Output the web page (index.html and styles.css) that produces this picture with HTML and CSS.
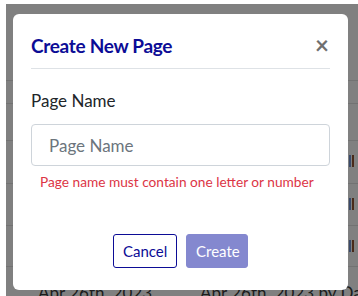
FILE: index.html
```html
<!DOCTYPE html>
<html>
<head>
<meta charset="utf-8">
<link rel="stylesheet" href="styles.css">
</head>
<body>
<div class="page">
  <div class="backdrop">
    <div class="row r1"></div>
    <div class="row r2"></div>
    <div class="row r3"><span class="mark m-blue"></span><span class="mark m-brown"></span></div>
    <div class="row r4"><span class="mark m-blue"></span><span class="mark m-brown"></span></div>
    <div class="row r5"><span class="mark m-blue"></span><span class="mark m-brown"></span></div>
    <div class="row r6">
      <span class="cell c1">Apr 26th, 2023</span>
      <span class="cell c2">Apr 26th, 2023 by Dan</span>
    </div>
  </div>
  <div class="modal">
    <div class="modal-header">
      <h2 class="modal-title">Create New Page</h2>
      <span class="close">×</span>
    </div>
    <div class="modal-body">
      <label class="label">Page Name</label>
      <div class="input">Page Name</div>
      <div class="error">Page name must contain one letter or number</div>
    </div>
    <div class="modal-footer">
      <button class="btn btn-cancel">Cancel</button>
      <button class="btn btn-create">Create</button>
    </div>
  </div>
</div>
</body>
</html>
```
FILE: styles.css
```css
html, body {
  margin: 0;
  padding: 0;
  background: #fff;
  width: 358px;
  height: 296px;
  overflow: hidden;
  font-family: "Lato", "Open Sans", sans-serif;
}
.page {
  position: relative;
  margin: 4px 0 0 6px;
  height: 292px;
  background: #808080;
  overflow: hidden;
}
.backdrop {
  display: flex;
  flex-direction: column;
  padding-top: 76px;
}
.row {
  position: relative;
  border-top: 1px solid #727272;
  box-sizing: border-box;
}
.r1 { height: 23px; }
.r2 { height: 37px; }
.r3 { height: 43px; }
.r4 { height: 42px; }
.r5 { height: 41px; }
.r6 { height: 30px; }
.mark {
  position: absolute;
  top: 14px;
  width: 2px;
  height: 12px;
}
.m-blue { left: 343px; background: #3a4a6a; }
.m-brown { left: 346px; background: #4a2a1a; }
.cell {
  position: absolute;
  top: 15px;
  font-size: 17px;
  color: #1c1c1c;
  white-space: nowrap;
}
.c1 { left: 32px; }
.c2 { left: 194px; }
.modal {
  position: absolute;
  left: 7px;
  top: 10px;
  width: 335px;
  height: 276px;
  box-sizing: border-box;
  background: #fff;
  border-radius: 6px;
  padding: 0 18px;
  display: flex;
  flex-direction: column;
}
.modal-header {
  display: flex;
  align-items: center;
  justify-content: space-between;
  height: 55px;
  border-bottom: 1px solid #dee2e6;
  box-sizing: border-box;
  padding-top: 8px;
}
.modal-title {
  margin: 0;
  font-size: 19px;
  font-weight: 700;
  color: #0c0c96;
  letter-spacing: -0.3px;
}
.close {
  font-size: 24px;
  font-weight: 700;
  color: #707070;
  line-height: 1;
  margin-right: 1px;
}
.modal-body {
  display: flex;
  flex-direction: column;
  padding-top: 21px;
}
.label {
  font-size: 17px;
  color: #212529;
  line-height: 21px;
}
.input {
  margin-top: 13px;
  height: 42px;
  box-sizing: border-box;
  border: 1px solid #ced4da;
  border-radius: 4px;
  padding: 0 17px;
  display: flex;
  align-items: center;
  font-size: 17px;
  color: #6c757d;
}
.error {
  margin-top: 8px;
  padding-left: 9px;
  font-size: 13.7px;
  color: #dc3545;
  line-height: 16px;
  white-space: nowrap;
}
.modal-footer {
  display: flex;
  justify-content: center;
  gap: 9px;
  margin-top: auto;
  margin-bottom: 22px;
}
.btn {
  height: 34px;
  border-radius: 3px;
  font-family: inherit;
  font-size: 15px;
  padding: 0 9px;
  cursor: pointer;
}
.btn-cancel {
  background: #fff;
  border: 1px solid #0c0c96;
  color: #0c0c96;
  width: 64px;
}
.btn-create {
  background: #8488cf;
  border: 1px solid #8488cf;
  color: #fff;
  width: 62px;
}
```
